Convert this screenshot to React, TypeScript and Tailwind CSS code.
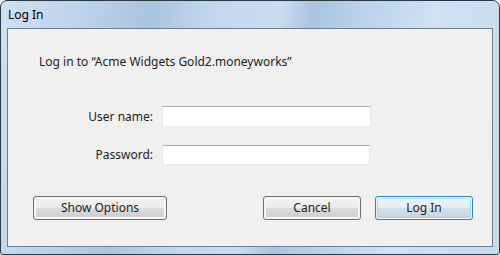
import React from "react";

const font = { fontFamily: '"Segoe UI", "Noto Sans", "Open Sans", sans-serif' };

function Btn({ children, w, primary }: { children: React.ReactNode; w: string; primary?: boolean }) {
  return (
    <div
      className={`${w} h-[24px] rounded-[3px] border ${
        primary ? "border-[#3c7fb1]" : "border-[#707070]"
      } p-px`}
    >
      <div
        className={`flex h-full w-full items-center justify-center rounded-[2px] border ${
          primary ? "border-[#9be0f8]" : "border-[#fcfcfc]"
        } bg-[linear-gradient(to_bottom,#f2f2f2_0%,#ebebeb_50%,#dddddd_50%,#cfcfcf_100%)] text-[12px] text-[#1e1e1e]`}
        style={
          primary
            ? { background: "linear-gradient(to bottom,#eef4f8 0%,#e4ecf2 50%,#d6e1ea 50%,#c9d6e1 100%)" }
            : undefined
        }
      >
        {children}
      </div>
    </div>
  );
}

export default function App() {
  return (
    <div className="w-[500px] h-[255px] bg-white" style={font}>
      <div className="flex h-[255px] w-[500px] flex-col rounded-t-[7px] rounded-b-[3px] border border-[#2d3742] bg-[linear-gradient(100deg,#cfe1f3_0%,#bcd3ea_15%,#a9c4df_28%,#c3d8ee_40%,#c9dcf0_52%,#a8c4e0_58%,#b8d1ea_66%,#cfe1f3_80%,#c7dbef_100%)] px-[6px] pb-[7px]">
        <div className="flex h-[27px] items-center pl-[1px] text-[12px] text-black">Log In</div>
        <div className="flex flex-1 flex-col border border-[#6e7f91] bg-[#f0f0f0]">
          <div className="ml-[31px] mt-[25px] h-[16px] text-[12px] leading-[16px] text-[#1e1e1e]">
            Log in to “Acme Widgets Gold2.moneyworks”
          </div>
          <div className="mt-[36px] flex items-center">
            <div className="w-[145px] text-right text-[12px] text-[#1e1e1e]">User name:</div>
            <div className="ml-[9px] h-[21px] w-[209px] border border-[#e3e9ef] border-t-[#abadb3] bg-white" />
          </div>
          <div className="mt-[18px] flex items-center">
            <div className="w-[145px] text-right text-[12px] text-[#1e1e1e]">Password:</div>
            <div className="ml-[9px] h-[20px] w-[208px] border border-[#e3e9ef] border-t-[#abadb3] bg-white" />
          </div>
          <div className="mt-[31px] flex items-center pl-[25px] pr-[19px]">
            <Btn w="w-[134px]">Show Options</Btn>
            <div className="flex-1" />
            <Btn w="w-[98px]">Cancel</Btn>
            <div className="w-[14px]" />
            <Btn w="w-[98px]" primary>
              Log In
            </Btn>
          </div>
        </div>
      </div>
    </div>
  );
}
